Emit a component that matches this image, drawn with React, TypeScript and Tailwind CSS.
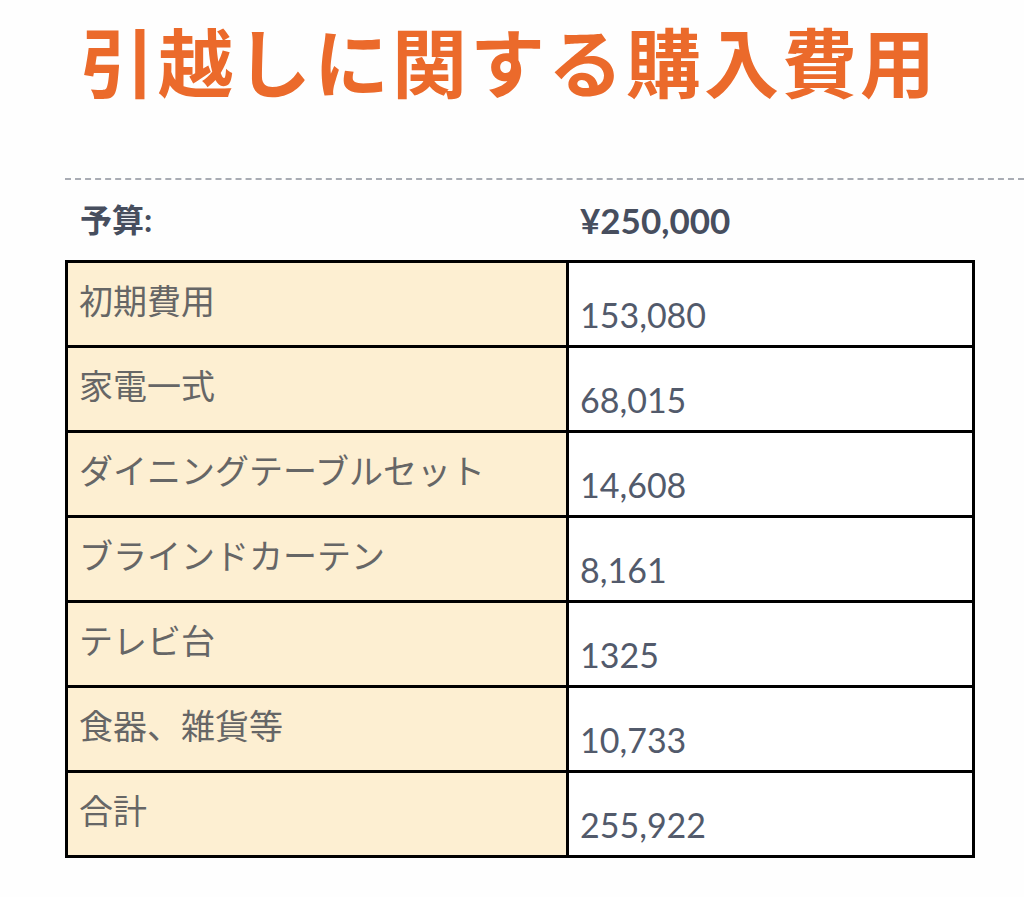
import React from 'react';

const rows = [
  { label: '初期費用', value: '153,080' },
  { label: '家電一式', value: '68,015' },
  { label: 'ダイニングテーブルセット', value: '14,608' },
  { label: 'ブラインドカーテン', value: '8,161' },
  { label: 'テレビ台', value: '1325' },
  { label: '食器、雑貨等', value: '10,733' },
  { label: '合計', value: '255,922' },
];

const jp = "font-['Lato','Noto_Sans_CJK_JP',sans-serif]";

export default function App() {
  return (
    <div className="w-[1024px] h-[897px] bg-[#fefefe] overflow-hidden">
      {/* Title */}
      <h1 className="pl-[80px] pt-[22px] h-[110px] text-[75px] tracking-[3px] leading-[1] font-bold text-[#eb6a2b] font-['Noto_Sans_CJK_JP',sans-serif]">
        引越しに関する購入費用
      </h1>

      {/* Divider */}
      <div className="ml-[65px] mt-[68px] border-t-2 border-dashed border-[#a9acb4]" />

      {/* Budget */}
      <div className={`flex items-center h-[80px] pl-[80px] text-[#474e5e] font-bold ${jp}`}>
        <div className="w-[500px] text-[32px]">予算:</div>
        <div className="text-[35px]">¥250,000</div>
      </div>

      {/* Table */}
      <table className="ml-[65px] w-[910px] border-collapse border-[3px] border-black">
        <tbody>
          {rows.map((r) => (
            <tr key={r.label} className="h-[85px]">
              <td className="w-[501px] border-[3px] border-black bg-[#fdefd2] align-top pl-[11px] pt-[13px] text-[34px] leading-[1.4] text-[#666666] font-['Noto_Sans_CJK_JP',sans-serif]">
                {r.label}
              </td>
              <td className="border-[3px] border-black bg-white align-bottom pl-[11px] pb-[6px] text-[34px] leading-[1.4] text-[#525a6b] font-['Lato',sans-serif]">
                {r.value}
              </td>
            </tr>
          ))}
        </tbody>
      </table>
    </div>
  );
}
